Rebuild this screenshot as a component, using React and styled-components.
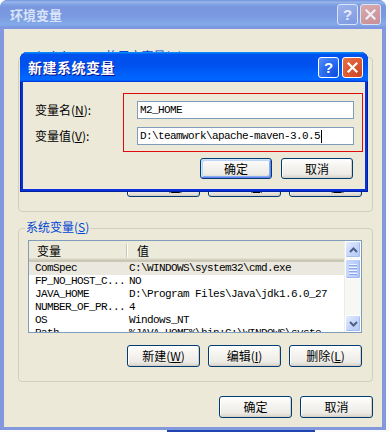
import React from 'react';
import styled, { createGlobalStyle } from 'styled-components';

const Global = createGlobalStyle`
  html, body { margin: 0; padding: 0; background: #fbfbfb; }
  body { font-family: "Noto Sans CJK SC", "Noto Sans", sans-serif; font-size: 12px; color: #000; }
  * { box-sizing: border-box; }
`;

const CJK = `"Noto Sans CJK SC", "Noto Sans", sans-serif`;
const MONO = `"Liberation Mono", "DejaVu Sans Mono", monospace`;

const Page = styled.div`
  position: relative;
  width: 389px;
  height: 432px;
  overflow: hidden;
  display: flex;
  flex-direction: column;
`;

const Window = styled.div`
  width: 386px;
  height: 430px;
  display: flex;
  flex-direction: column;
  background: #8399de;
  border-radius: 8px 8px 0 0;
`;

const BehindStrip = styled.div`
  margin-left: 167px;
  width: 148px;
  height: 2px;
  background: #2145b0;
`;

const TitleBar = styled.div`
  height: ${p => p.$h}px;
  flex: none;
  display: flex;
  align-items: center;
  padding: 0 ${p => p.$pr}px 0 ${p => p.$pl}px;
  border-radius: 7px 7px 0 0;
  background: ${p => p.$active
    ? 'linear-gradient(180deg, #0997ff, #0053ee 8%, #0050ee 40%, #0066ff 88%, #0066ff 93%, #005bff 95%, #003dd7 96%, #003dd7)'
    : 'linear-gradient(180deg, #7697e7, #7e9ee3 3%, #94afe8 6%, #97b4e9 8%, #82a5e4 14%, #7c9fe2 17%, #7996de 25%, #7b99e1 56%, #82a9e9 81%, #80a5e7 89%, #7b96e1 94%, #7a93df 97%, #8aa0e2)'};
`;

const TitleText = styled.span`
  flex: 1;
  font-family: ${CJK};
  font-weight: 700;
  font-size: ${p => p.$size}px;
  line-height: 1;
  color: ${p => p.$active ? '#ffffff' : '#d8e4f8'};
  text-shadow: ${p => p.$active ? '1px 1px 0 #0f1089' : 'none'};
  letter-spacing: ${p => p.$ls || 0}px;
`;

const TitleBtns = styled.div`
  display: flex;
  gap: ${p => p.$gap}px;
`;

const CapBtn = styled.div`
  width: 21px;
  height: 21px;
  border-radius: 3px;
  border: 1px solid ${p => p.$active ? '#ffffff' : '#dbe3f6'};
  display: flex;
  align-items: center;
  justify-content: center;
  font-family: "Liberation Sans", sans-serif;
  font-weight: 700;
  font-size: 15px;
  color: ${p => p.$active ? '#ffffff' : '#e6ecfa'};
  background: ${p => {
    if (p.$kind === 'close') {
      return p.$active
        ? 'radial-gradient(circle at 90% 90%, #cc4628 0%, #dc5a32 55%, #e5754d 100%)'
        : 'linear-gradient(160deg, #d9a9ae, #c98f96)';
    }
    return p.$active
      ? 'radial-gradient(circle at 90% 90%, #0f4ee0 0%, #2a6cf2 55%, #5c93f7 100%)'
      : 'linear-gradient(160deg, #9cb2ec, #7f9ae4)';
  }};
`;

const CloseGlyph = ({ color }) => (
  <svg width="11" height="11" viewBox="0 0 11 11">
    <path d="M1.5 1.5 L9.5 9.5 M9.5 1.5 L1.5 9.5" stroke={color} strokeWidth="2.2" strokeLinecap="square" />
  </svg>
);

const Body = styled.div`
  flex: 1;
  margin: 0 4px 3px;
  background: #ece9d8;
  padding: 28px 9px 9px 14px;
  display: flex;
  flex-direction: column;
`;

const Group = styled.div`
  position: relative;
  height: ${p => p.$h}px;
  margin-top: ${p => p.$mt || 0}px;
  border: 1px solid #d0d0bf;
  border-radius: 4px;
  padding: ${p => p.$pt}px 10px 14px 9px;
  display: flex;
  flex-direction: column;
  gap: ${p => p.$gap || 11}px;
`;

const Legend = styled.span`
  position: absolute;
  top: -9px;
  left: 6px;
  padding: 0 1px;
  line-height: 14px;
  background: #ece9d8;
  color: #0046d5;
  font-family: ${CJK};
  font-size: 12px;
  white-space: nowrap;
`;

const BtnRow = styled.div`
  display: flex;
  justify-content: flex-end;
  gap: ${p => p.$gap || 8}px;
  margin-top: ${p => p.$mt || 0}px;
  padding-right: ${p => p.$pr || 0}px;
`;

const Btn = styled.div`
  width: ${p => p.$w || 73}px;
  height: ${p => p.$h || 22}px;
  border: 1px solid #003c74;
  border-radius: 3px;
  background: linear-gradient(180deg, #ffffff 0%, #f6f5f1 35%, #ecebe6 80%, #d8d2c7 100%);
  box-shadow: ${p => p.$def
    ? 'inset 1px 1px 0 #cee7ff, inset -1px -1px 0 #6982ee, inset 2px 2px 0 #bcd4f6, inset -2px -2px 0 #89adf4'
    : 'inset -1px -1px 0 #d6d0c5, inset 1px 1px 0 #ffffff'};
  display: flex;
  align-items: center;
  justify-content: center;
  font-family: ${CJK};
  font-size: 12px;
  color: #000;
  line-height: 1;
  u { text-decoration: underline; text-underline-offset: 1px; }
`;

const ListBox = styled.div`
  flex: 1;
  min-height: 0;
  display: flex;
  border: 1px solid #7f9db9;
  background: #fff;
  overflow: hidden;
`;

const ListMain = styled.div`
  flex: 1;
  min-width: 0;
  display: flex;
  flex-direction: column;
`;

const Header = styled.div`
  flex: none;
  display: grid;
  grid-template-columns: 98px 1fr;
  height: 21px;
  background: linear-gradient(180deg, #ebeadb 0 17px, #e2decd 17px 18px, #d6d2c2 18px 19px, #cbc7b8 19px 21px);
`;

const HeadCell = styled.div`
  display: flex;
  align-items: center;
  padding-left: ${p => p.$pl}px;
  padding-bottom: 3px;
  font-family: ${CJK};
  font-size: 12px;
  position: relative;
  ${p => p.$divider && `
    &::after {
      content: '';
      position: absolute;
      right: 0;
      top: 3px;
      bottom: 5px;
      width: 1px;
      background: #c7c5b2;
      box-shadow: 1px 0 0 #fff;
    }
  `}
`;

const Row = styled.div`
  flex: none;
  display: grid;
  grid-template-columns: 98px 1fr;
  height: 13px;
  line-height: 13px;
  background: ${p => p.$sel ? '#ebe9df' : 'transparent'};
  font-family: ${MONO};
  font-size: 11px;
  letter-spacing: -0.6px;
  white-space: nowrap;
`;

const Cell = styled.div`
  overflow: hidden;
  padding-left: ${p => p.$pl}px;
`;

const Scroll = styled.div`
  flex: none;
  width: 17px;
  display: flex;
  flex-direction: column;
  background: #f7f7f3;
  border-left: 1px solid #eeede5;
`;

const ScrollBtn = styled.div`
  flex: none;
  height: 17px;
  border: 1px solid #fff;
  border-radius: 2px;
  background: linear-gradient(135deg, #e3ebfd 0%, #c8d7fb 50%, #b5c9f7 100%);
  box-shadow: inset -1px -1px 0 #a5bcf1;
  display: flex;
  align-items: center;
  justify-content: center;
`;

const Track = styled.div`
  flex: 1;
  display: flex;
  flex-direction: column;
  padding-top: 1px;
`;

const Thumb = styled.div`
  height: 20px;
  border: 1px solid #fff;
  border-radius: 2px;
  background: linear-gradient(90deg, #c9d8fc 0%, #bcd0fa 60%, #b1c6f6 100%);
  box-shadow: inset -1px -1px 0 #9fb7ee;
  display: flex;
  flex-direction: column;
  align-items: center;
  justify-content: center;
  gap: 1px;
`;

const Grip = styled.div`
  width: 8px;
  height: 1px;
  background: #eef3fd;
  box-shadow: 0 1px 0 #8ca5e3;
  margin-bottom: 1px;
`;

const Arrow = ({ up }) => (
  <svg width="9" height="6" viewBox="0 0 9 6">
    <path d={up ? 'M1 5 L4.5 1.5 L8 5' : 'M1 1 L4.5 4.5 L8 1'} fill="none" stroke="#4d6185" strokeWidth="2" />
  </svg>
);

/* inner dialog */
const Dialog = styled.div`
  position: absolute;
  left: 20px;
  top: 52px;
  width: 348px;
  height: 140px;
  display: flex;
  flex-direction: column;
  background: #0831d9;
  border-radius: 8px 8px 0 0;
  box-shadow: inset 1px 0 0 #001ea0, inset -1px 0 0 #001ea0, inset 0 -1px 0 #001ea0;
`;

const DBody = styled.div`
  position: relative;
  flex: 1;
  margin: 0 3px 3px;
  background: #ece9d8;
  padding: 19px 11px 10px 12px;
  display: flex;
  flex-direction: column;
`;

const Field = styled.div`
  display: grid;
  grid-template-columns: 102px 1fr;
  align-items: center;
  height: 18px;
  & + & { margin-top: 8px; }
`;

const Label = styled.span`
  font-family: ${CJK};
  font-size: 12px;
  line-height: 1;
  u { text-decoration: underline; text-underline-offset: 1px; }
`;

const TextBox = styled.div`
  height: 18px;
  border: 1px solid #7f9db9;
  background: #fff;
  display: flex;
  align-items: center;
  padding-left: 2px;
  font-family: ${MONO};
  font-size: 11px;
  letter-spacing: -0.6px;
  white-space: nowrap;
`;

const Caret = styled.span`
  display: inline-block;
  width: 1px;
  height: 13px;
  background: #000;
  margin-left: 1px;
`;

const Mark = styled.div`
  position: absolute;
  left: 100px;
  top: 11px;
  width: 240px;
  height: 59px;
  border: 1px solid #e10a0a;
  pointer-events: none;
`;

const rows = [
  ['ComSpec', 'C:\\WINDOWS\\system32\\cmd.exe', true],
  ['FP_NO_HOST_C...', 'NO'],
  ['JAVA_HOME', 'D:\\Program Files\\Java\\jdk1.6.0_27'],
  ['NUMBER_OF_PR...', '4'],
  ['OS', 'Windows_NT'],
  ['Path', '%JAVA_HOME%\\bin;C:\\WINDOWS\\syste'],
];

export default function App() {
  return (
    <Page>
      <Global />
      <Window>
        <TitleBar $h={29} $pl={10} $pr={5}>
          <TitleText $size={13}>环境变量</TitleText>
          <TitleBtns $gap={2}>
            <CapBtn>?</CapBtn>
            <CapBtn $kind="close"><CloseGlyph color="#eef0f8" /></CapBtn>
          </TitleBtns>
        </TitleBar>
        <Body>
          <Group $h={155} $pt={14}>
            <Legend>Administrator 的用户变量(<u>U</u>)</Legend>
            <ListBox />
            <BtnRow>
              <Btn>新建(<u>N</u>)</Btn>
              <Btn>编辑(<u>E</u>)</Btn>
              <Btn>删除(<u>D</u>)</Btn>
            </BtnRow>
          </Group>
          <Group $h={154} $mt={16} $pt={11} $gap={12}>
            <Legend>系统变量(<u>S</u>)</Legend>
            <ListBox>
              <ListMain>
                <Header>
                  <HeadCell $pl={8} $divider>变量</HeadCell>
                  <HeadCell $pl={10}>值</HeadCell>
                </Header>
                {rows.map(([k, v, sel]) => (
                  <Row key={k} $sel={sel}>
                    <Cell $pl={6}>{k}</Cell>
                    <Cell $pl={2}>{v}</Cell>
                  </Row>
                ))}
              </ListMain>
              <Scroll>
                <ScrollBtn><Arrow up /></ScrollBtn>
                <Track>
                  <Thumb><Grip /><Grip /><Grip /><Grip /></Thumb>
                </Track>
                <ScrollBtn><Arrow /></ScrollBtn>
              </Scroll>
            </ListBox>
            <BtnRow>
              <Btn>新建(<u>W</u>)</Btn>
              <Btn>编辑(<u>I</u>)</Btn>
              <Btn>删除(<u>L</u>)</Btn>
            </BtnRow>
          </Group>
          <BtnRow $mt={14}>
            <Btn>确定</Btn>
            <Btn>取消</Btn>
          </BtnRow>
        </Body>
      </Window>
      <BehindStrip />

      <Dialog>
        <TitleBar $active $h={30} $pl={8} $pr={5}>
          <TitleText $active $size={14} $ls={0.5}>新建系统变量</TitleText>
          <TitleBtns $gap={3}>
            <CapBtn $active>?</CapBtn>
            <CapBtn $active $kind="close"><CloseGlyph color="#ffffff" /></CapBtn>
          </TitleBtns>
        </TitleBar>
        <DBody>
          <Field>
            <Label>变量名(<u>N</u>):</Label>
            <TextBox>M2_HOME</TextBox>
          </Field>
          <Field>
            <Label>变量值(<u>V</u>):</Label>
            <TextBox>D:\teamwork\apache-maven-3.0.5<Caret /></TextBox>
          </Field>
          <BtnRow $mt={13} $gap={9} $pr={1}>
            <Btn $w={72} $h={21} $def>确定</Btn>
            <Btn $w={72} $h={21}>取消</Btn>
          </BtnRow>
          <Mark />
        </DBody>
      </Dialog>
    </Page>
  );
}
